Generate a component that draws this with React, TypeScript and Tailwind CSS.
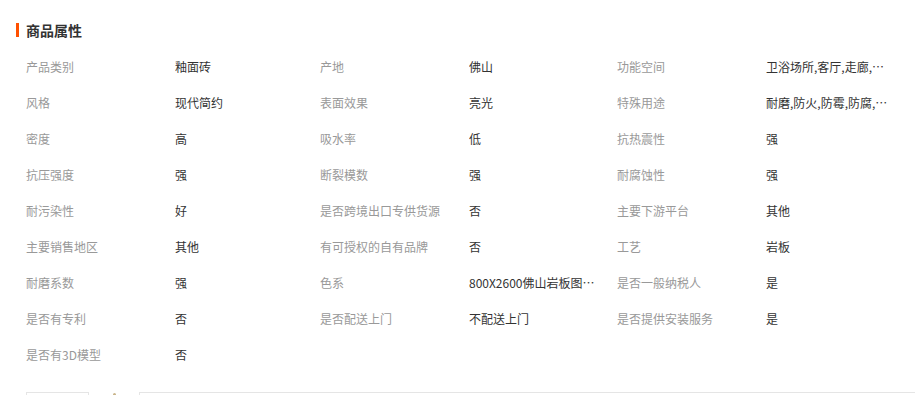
import React from "react";

const rows: [string, string][][] = [
  [["产品类别", "釉面砖"], ["产地", "佛山"], ["功能空间", "卫浴场所,客厅,走廊,阳台,厨房"]],
  [["风格", "现代简约"], ["表面效果", "亮光"], ["特殊用途", "耐磨,防火,防霉,防腐,防滑"]],
  [["密度", "高"], ["吸水率", "低"], ["抗热震性", "强"]],
  [["抗压强度", "强"], ["断裂模数", "强"], ["耐腐蚀性", "强"]],
  [["耐污染性", "好"], ["是否跨境出口专供货源", "否"], ["主要下游平台", "其他"]],
  [["主要销售地区", "其他"], ["有可授权的自有品牌", "否"], ["工艺", "岩板"]],
  [["耐磨系数", "强"], ["色系", "800X2600佛山岩板图片大全"], ["是否一般纳税人", "是"]],
  [["是否有专利", "否"], ["是否配送上门", "不配送上门"], ["是否提供安装服务", "是"]],
  [["是否有3D模型", "否"]],
];

const groupW = ["w-[294px]", "w-[297px]", "w-[297px]"];

export default function App() {
  return (
    <div
      className="w-[915px] h-[395px] overflow-hidden bg-white"
      style={{ fontFamily: '"Noto Sans CJK SC", "Microsoft YaHei", sans-serif' }}
    >
      <div className="flex items-center pl-4 pt-[22px] h-[38px]">
        <div className="w-[3px] h-[14px] bg-[#ff5000]" />
        <div className="ml-[7px] text-[14px] font-bold text-[#333] leading-[16px]">商品属性</div>
      </div>
      <div className="pl-[26px] pt-[11px]">
        {rows.map((row, i) => (
          <div key={i} className="flex h-9 items-center text-[12px] leading-[16px]">
            {row.map(([k, v], j) => (
              <div key={j} className={`flex ${groupW[j]} shrink-0 items-center`}>
                <div className="w-[149px] shrink-0 text-[#999] whitespace-nowrap">{k}</div>
                <div className="w-[128px] shrink-0 truncate text-[#333]">{v}</div>
              </div>
            ))}
          </div>
        ))}
      </div>
      <div className="flex items-start pl-[26px] mt-[19px]">
        <div className="w-[63px] h-10 border border-[#e5e5e5] border-b-0" />
        <div className="w-[50px] flex justify-center pt-[1px]">
          <div className="w-[3px] h-[3px] rounded-full bg-[#c9b48a]" />
        </div>
        <div className="flex-1 h-10 border-t border-l border-[#e5e5e5]" />
      </div>
    </div>
  );
}
